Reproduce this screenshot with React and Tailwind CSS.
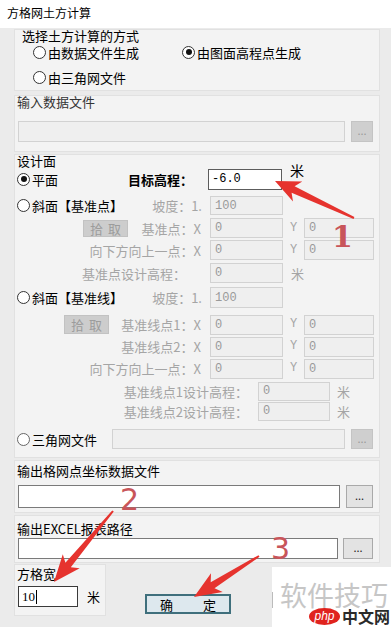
import React from 'react';

const arrowPoints = (x1, y1, x2, y2, hl, hw, w0, w1) => {
  const dx = x2 - x1;
  const dy = y2 - y1;
  const len = Math.hypot(dx, dy);
  const ux = dx / len;
  const uy = dy / len;
  const nx = -uy;
  const ny = ux;
  const bx = x2 - ux * hl;
  const by = y2 - uy * hl;
  const bx2 = x2 - ux * (hl + 5);
  const by2 = y2 - uy * (hl + 5);
  const pts = [
    [x1 + (nx * w0) / 2, y1 + (ny * w0) / 2],
    [bx + (nx * w1) / 2, by + (ny * w1) / 2],
    [bx2 + (nx * hw) / 2, by2 + (ny * hw) / 2],
    [x2, y2],
    [bx2 - (nx * hw) / 2, by2 - (ny * hw) / 2],
    [bx - (nx * w1) / 2, by - (ny * w1) / 2],
    [x1 - (nx * w0) / 2, y1 - (ny * w0) / 2],
  ];
  return pts.map((p) => p.map((v) => v.toFixed(1)).join(',')).join(' ');
};

const Radio = ({ checked, dim }) => (
  <span
    className={`w-[13px] h-[13px] rounded-full border ${dim ? 'border-[#666]' : 'border-[#333]'} bg-white flex items-center justify-center shrink-0`}
  >
    {checked && <span className="w-[6px] h-[6px] rounded-full bg-[#111]" />}
  </span>
);

const DisInput = ({ w, h = 'h-[20px]', value }) => (
  <div
    className={`${w} ${h} bg-[#efefef] border border-[#d2d2d2] flex items-center pl-[4px] text-[12px] leading-[12px] text-[#9a9a9a] font-['Liberation_Mono',monospace] shrink-0`}
  >
    {value}
  </div>
);

const DisBtn = ({ w = 'w-[22px]', h = 'h-[21px]' }) => (
  <div className={`${w} ${h} bg-[#cfcfcf] border border-[#c4c4c4] flex items-center justify-center text-[#9a9a9a] text-[11px] leading-none pb-[2px] shrink-0`}>
    ...
  </div>
);

const EnBtn = ({ w, h }) => (
  <div className={`${w} ${h} bg-[#e3e3e3] border border-[#a9a9a9] flex items-center justify-center text-[#222] text-[11px] leading-none pb-[2px] shrink-0`}>
    ...
  </div>
);

const PickBtn = ({ ml, h }) => (
  <div className={`${ml} w-[45px] ${h} bg-[#cdcdcd] border border-[#c2c2c2] flex items-center justify-center gap-[5px] text-[#9c9c9c] text-[13px] leading-[13px] whitespace-nowrap shrink-0`}>
    <span>拾</span>
    <span>取</span>
  </div>
);

const XYRow = ({ mt, h, label, left }) => (
  <div className={`flex items-center ${mt} ${h}`}>
    <div className="w-[195px] flex items-center shrink-0">
      {left}
      <span className="flex-1 text-right pr-[9px] text-[#a5a5a5] whitespace-nowrap">{label}</span>
    </div>
    <DisInput w="w-[73px]" h="h-[20px]" value="0" />
    <span className="w-[21px] pl-[7px] text-[#a5a5a5] font-['Liberation_Mono',monospace] text-[12px]">Y</span>
    <DisInput w="w-[70px]" h="h-[20px]" value="0" />
  </div>
);

const Group = ({ className, children }) => (
  <div className={`ml-[14px] w-[366px] border border-[#e1e1e1] bg-[#f3f3f3] ${className}`}>{children}</div>
);

export default function App() {
  return (
    <div className="relative w-[391px] h-[627px] overflow-hidden bg-[#ebebeb] text-[13px] leading-[13px] text-black font-['Noto_Sans_CJK_SC',sans-serif]">
      <div className="h-[28px] bg-white pl-[7px] pt-[6px] text-[12px] leading-[13px]">方格网土方计算</div>

      <Group className="mt-[1px]">
        <div className="h-[12px] leading-[12px] pl-[7px]">选择土方计算的方式</div>
        <div className="h-[20px] flex items-center pl-[18px]">
          <div className="w-[149px] flex items-center gap-[2px]">
            <Radio />
            <span>由数据文件生成</span>
          </div>
          <div className="flex items-center gap-[2px]">
            <Radio checked />
            <span>由图面高程点生成</span>
          </div>
        </div>
        <div className="h-[20px] mt-[5px] mb-[3px] flex items-center pl-[18px] gap-[2px]">
          <Radio />
          <span>由三角网文件</span>
        </div>
      </Group>

      <Group className="mt-[4px]">
        <div className="h-[12px] leading-[12px] pl-[2px] text-[#333]">输入数据文件</div>
        <div className="mt-[13px] mb-[9px] pl-[3px] flex items-center gap-[6px]">
          <DisInput w="w-[327px]" h="h-[21px]" value="" />
          <DisBtn />
        </div>
      </Group>

      <Group className="mt-[2px]">
        <div className="h-[12px] leading-[12px] pl-[2px]">设计面</div>

        <div className="mt-[1px] h-[22px] flex items-center">
          <div className="w-[113px] flex items-center pl-[2px] gap-[2px]">
            <Radio checked />
            <span>平面</span>
          </div>
          <span className="w-[80px] font-bold">目标高程：</span>
          <div className="w-[74px] h-[21px] bg-white border border-[#5c5c5c] flex items-center pl-[3px] text-[12px] font-['Liberation_Mono',monospace]">
            -6.0
          </div>
          <span className="ml-[8px] self-start -mt-[4px] text-[14px]">米</span>
        </div>

        <div className="mt-[6px] h-[19px] flex items-center">
          <div className="w-[195px] flex items-center shrink-0">
            <div className="flex items-center pl-[2px] gap-[2px]">
              <Radio />
              <span>斜面【基准点】</span>
            </div>
            <span className="flex-1 text-right pr-[8px] text-[#a5a5a5]">坡度：1.</span>
          </div>
          <DisInput w="w-[73px]" h="h-[19px]" value="100" />
        </div>

        <XYRow mt="mt-[3px]" h="h-[20px]" label="基准点：X" left={<PickBtn ml="ml-[68px]" h="h-[17px]" />} />
        <XYRow mt="mt-[2px]" h="h-[20px]" label="向下方向上一点：X" />

        <div className="mt-[3px] h-[20px] flex items-center">
          <span className="w-[195px] text-right pr-[24px] text-[#a5a5a5] shrink-0">基准点设计高程：</span>
          <DisInput w="w-[73px]" h="h-[20px]" value="0" />
          <span className="ml-[8px] text-[#a5a5a5]">米</span>
        </div>

        <div className="mt-[4px] h-[21px] flex items-center">
          <div className="w-[195px] flex items-center shrink-0">
            <div className="flex items-center pl-[2px] gap-[2px]">
              <Radio />
              <span>斜面【基准线】</span>
            </div>
            <span className="flex-1 text-right pr-[8px] text-[#a5a5a5]">坡度：1.</span>
          </div>
          <DisInput w="w-[73px]" h="h-[21px]" value="100" />
        </div>

        <XYRow mt="mt-[6px]" h="h-[21px]" label="基准线点1：X" left={<PickBtn ml="ml-[49px]" h="h-[19px]" />} />
        <XYRow mt="mt-[1px]" h="h-[21px]" label="基准线点2：X" />
        <XYRow mt="mt-[1px]" h="h-[21px]" label="向下方向上一点：X" />

        <div className="mt-[2px] h-[20px] flex items-center">
          <span className="w-[243px] text-right pr-[10px] text-[#a5a5a5] shrink-0">基准线点1设计高程：</span>
          <DisInput w="w-[72px]" h="h-[19px]" value="0" />
          <span className="ml-[7px] text-[#a5a5a5]">米</span>
        </div>
        <div className="h-[20px] flex items-center">
          <span className="w-[243px] text-right pr-[10px] text-[#a5a5a5] shrink-0">基准线点2设计高程：</span>
          <DisInput w="w-[72px]" h="h-[19px]" value="0" />
          <span className="ml-[7px] text-[#a5a5a5]">米</span>
        </div>

        <div className="mt-[8px] mb-[8px] h-[20px] flex items-center">
          <div className="w-[97px] flex items-center pl-[2px] gap-[2px] shrink-0">
            <Radio dim />
            <span>三角网文件</span>
          </div>
          <DisInput w="w-[233px]" h="h-[20px]" value="" />
          <div className="ml-[6px]">
            <DisBtn h="h-[20px]" />
          </div>
        </div>
      </Group>

      <Group className="mt-[2px]">
        <div className="pt-[4px] h-[16px] leading-[12px] pl-[2px]">输出格网点坐标数据文件</div>
        <div className="mt-[8px] mb-[4px] pl-[3px] flex items-center gap-[6px]">
          <div className="w-[322px] h-[23px] bg-white border border-[#7a7a7a]" />
          <EnBtn w="w-[27px]" h="h-[23px]" />
        </div>
      </Group>

      <Group className="mt-[2px]">
        <div className="pt-[7px] h-[19px] leading-[12px] pl-[2px]">输出EXCEL报表路径</div>
        <div className="mt-[3px] mb-[3px] pl-[3px] flex items-center gap-[5px]">
          <div className="w-[320px] h-[21px] bg-white border border-[#7a7a7a]" />
          <EnBtn w="w-[30px]" h="h-[21px]" />
        </div>
      </Group>

      <div className="flex items-start">
        <div className="ml-[14px] mt-[1px] w-[92px] h-[52px] border border-[#e1e1e1] bg-[#f3f3f3]">
          <div className="pt-[3px] h-[15px] leading-[12px] pl-[2px]">方格宽</div>
          <div className="mt-[6px] flex items-center">
            <div className="ml-[3px] w-[60px] h-[21px] bg-white border border-[#3a3a3a] flex items-center pl-[3px] text-[13px] font-['Liberation_Serif',serif]">
              10<span className="w-[1px] h-[14px] bg-black ml-[1px]" />
            </div>
            <span className="ml-[9px]">米</span>
          </div>
        </div>
        <div className="ml-[39px] mt-[31px] w-[86px] h-[20px] border-2 border-[#3f6f7c] bg-[#dde8ee] flex items-center justify-center gap-[30px] text-[13px]">
          <span>确</span>
          <span>定</span>
        </div>
      </div>

      <div className="absolute left-[272px] top-[567px] w-[119px] h-[60px] bg-white">
        <div className="absolute left-0 top-[25px] w-[1px] h-[16px] bg-[#bbb]" />
        <div className="absolute left-[8px] top-[15px] text-[27px] leading-[26px] text-[#c6c6c6] whitespace-nowrap">软件技巧</div>
        <div className="absolute left-[37px] top-[41px] w-[31px] h-[17px] rounded-[50%] bg-[#e0231e] flex items-center justify-center text-white text-[12px] leading-none italic font-['Liberation_Sans',sans-serif] pb-[2px]">
          php
        </div>
        <div className="absolute left-[70px] top-[40px] text-[16px] leading-[18px] font-bold text-[#2a2a2a] whitespace-nowrap">中文网</div>
      </div>

      <svg className="absolute left-0 top-0 pointer-events-none" width="391" height="627">
        <polygon points={arrowPoints(354, 218, 275, 181, 20, 22, 2, 7)} fill="#e6332e" />
        <polygon points={arrowPoints(113, 511, 54, 582, 22, 22, 2, 7)} fill="#e6332e" />
        <polygon points={arrowPoints(259, 556, 194, 597, 22, 22, 2, 7)} fill="#e6332e" />
      </svg>

      <div className="absolute left-[332px] top-[222px] text-[30px] leading-[30px] font-bold text-[#c8555a] font-['DejaVu_Serif',serif]">1</div>
      <div className="absolute left-[120px] top-[485px] text-[30px] leading-[30px] text-[#c8555a] font-['DejaVu_Sans',sans-serif]">2</div>
      <div className="absolute left-[271px] top-[534px] text-[30px] leading-[30px] text-[#c8555a] font-['DejaVu_Sans',sans-serif]">3</div>
    </div>
  );
}
